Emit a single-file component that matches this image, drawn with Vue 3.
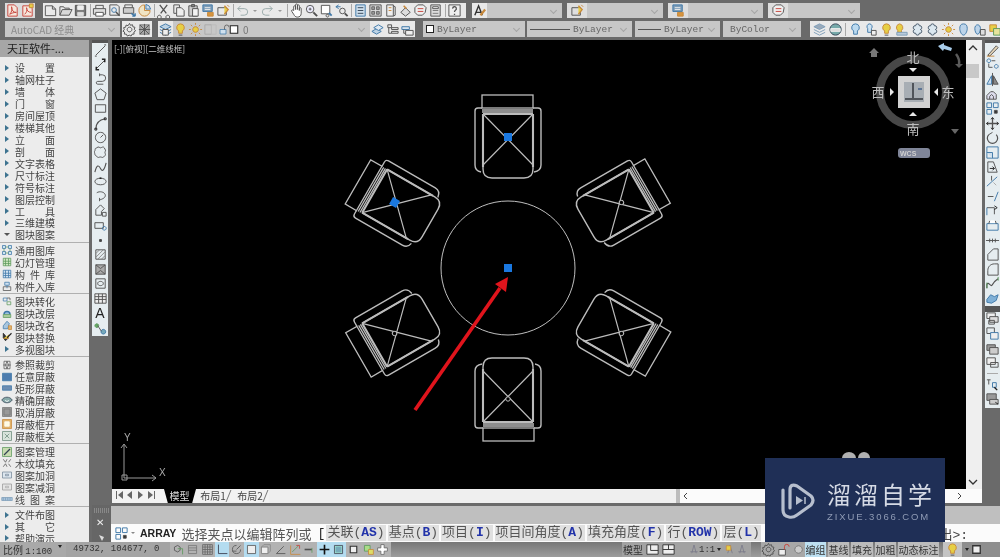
<script setup>
import { h } from 'vue'

const D = '#525252', B = '#3f78a8', O = '#c8893c', Y = '#e6cf45', R = '#c8443c', G = '#5d9a5d', L = '#7d9db8'
const icons = {
  pdfa: [['M3 2h7l3 3v9H3z', R, '#f6e6dc'], ['M5 12c2-2 3-5 2-8 0 4 2 6 5 6-3 0-5 1-7 2z', R]],
  pdfb: [['M3 3h7l3 3v8H3z', R, '#f6e6dc'], ['M10 1h4v4h-4z', O, Y], ['M5 12c2-2 3-4 2-7 0 3 2 5 5 5', R]],
  new: [['M2.5 3h7.5l3.5 3.5V13.5H2.5z'], ['M10 3v3.5h3.5']],
  open: [['M2 13V4h4l1 1.5h5V7'], ['M2 13l2.5-6H15l-3 6z', D, '#d8d8d8']],
  save: [['M2.5 2.5h11v11h-11z', D, '#777'], ['M5 3h6v4H5z', '#eee', '#eee'], ['M5 10h6v3.5H5z', '#ddd', '#ddd']],
  print: [['M4 6V2.5h8V6'], ['M1.5 6h13v6h-13z', D, '#ddd'], ['M4 10h8v4H4z', D, '#fff']],
  preview: [['M3 2h8l2 2v9H3z'], ['M7.5 7.5m-2.5 0a2.5 2.5 0 1 0 5 0a2.5 2.5 0 1 0-5 0', B], ['M9.5 9.5l4 4', D, 'none', 1.6]],
  publish: [['M3 5V2h8v3'], ['M1.5 5h11v6h-11z', D, '#ccc'], ['M10 11l4 3M14 14v-3M14 14h-3', B, 'none', 1.5]],
  plot3d: [['M8 2a6 6 0 1 0 6 6h-6z', O, '#f0e4c4'], ['M9.5 1.5a6 6 0 0 1 5 5h-5z', B, '#cfe0ee']],
  cut: [['M4 2l7 9M12 2l-7 9', D, 'none', 1.4], ['M3.5 13a2 2 0 1 0 .1 0zM12.5 13a2 2 0 1 0 .1 0z']],
  copy: [['M3 2h6v3'], ['M3 2v9h3'], ['M6 5h5l3 3v6H6z', D, '#eee']],
  paste: [['M3 3h9v11H3z', D, '#ccc'], ['M6 1.5h3V4H6z', D, '#888'], ['M7 6h6v8H7z', D, '#f2f2f2']],
  match: [['M2 2h10v7H2z', B, '#7d9db8'], ['M4 5h6M4 7h6', '#eee'], ['M7 10h6v4H7z', O, '#d7953e']],
  matchp: [['M2 5h9v8H2z', D], ['M9 3l4 4-4 5', O, Y, 1.4], ['M12 2l2 2', O]],
  undo: [['M3 6h7a3.5 3.5 0 0 1 0 7H6', '#9aa'], ['M6 3L3 6l3 3', '#9aa']],
  redo: [['M13 6H6a3.5 3.5 0 0 0 0 7h4', '#9aa'], ['M10 3l3 3-3 3', '#9aa']],
  pan: [['M5 8V4a1 1 0 0 1 2 0v3-5a1 1 0 0 1 2 0v5-4a1 1 0 0 1 2 0v5-2a1 1 0 0 1 2 0v5c0 3-2 4-4 4s-3-1-4-3L3 9c-1-2 1-2 2-1z', D, '#fff']],
  zoomr: [['M6.5 6.5m-4 0a4 4 0 1 0 8 0a4 4 0 1 0-8 0', D, '#eef'], ['M10 10l4 4', D, 'none', 2], ['M5 6.5h3M6.5 5v3', D]],
  zoomw: [['M2.5 2.5h9v9h-9z', D, '#fff'], ['M10.5 10.5l3 3', B, 'none', 2], ['M9 12a1.5 1.5 0 1 0 .1 0', D]],
  zoomp: [['M2 4l3-2M2 4l3 2M2 4h5', B], ['M9 8.5m-3 0a3 3 0 1 0 6 0a3 3 0 1 0-6 0'], ['M11.5 11l3 3', D, 'none', 2]],
  props: [['M3 2h10v12H3z', B, '#cfdfec'], ['M5 5h6M5 8h6M5 11h6', '#345']],
  dc: [['M2 2h12v12H2z', D, '#ddd'], ['M4 4h3v3H4zM9 4h3v3H9zM4 9h3v3H4zM9 9h3v3H9z', '#666', '#999']],
  tools: [['M4 2h7v12H4z', D, '#eee'], ['M11 3l2 1v9l-2 1', D], ['M6 5h3M6 8h3', O]],
  sheet: [['M3 10l5-5 5 5-5 4z', D, '#ddd'], ['M6 3l3 3', O, 'none', 1.6]],
  markup: [['M5 2h6l3 3-1 5-3 3H5l-3-3V5z', D, '#eee'], ['M5 6h6M5 9h6', R]],
  calc: [['M3 2h10v12H3z', D, '#ddd'], ['M5 4h6v2H5z', D, '#fff'], ['M5 8h6M5 11h6', '#777']],
  help: [['M2 2h12v12H2z', D, '#eee'], ['M6 6a2 2 0 1 1 3 1.7c-1 .6-1 1-1 2M8 11.5v1.2', D, 'none', 1.4]],
  atext: [['M3 13L7 3l4 10M4.5 10h5', '#333', 'none', 1.5], ['M9 13l5-6', O, 'none', 2.4]],
  gear: [['M8 5.5a2.5 2.5 0 1 0 .1 0z'], ['M8 1.5l1 2 2.2-.6.4 2.2 2.2.5-.7 2.2 1.4 1.6-1.8 1.3.2 2.2-2.2.1-1 2-2-1-2 1-1-2-2.2-.1.2-2.2L1 9.8l1.4-1.6-.7-2.2 2.2-.5.4-2.2 2.2.6z']],
  wsp: [['M3 3h10v10H3z', '#777', '#aaa'], ['M3 3l10 10M13 3L3 13M8 2v12M2 8h12', '#555']],
  layer: [['M2 5l6-3 6 3-6 3z', B, '#bcd2e4'], ['M2 8l6 3 6-3M2 11l6 3 6-3', B], ['M5 8h6v6H5z', D, '#eee']],
  bulb: [['M8 2a4 4 0 0 0-2 7.5V12h4V9.5A4 4 0 0 0 8 2z', O, Y], ['M6 14h4', D]],
  sun: [['M8 5a3 3 0 1 0 .1 0z', O, Y], ['M8 1v2M8 13v2M1 8h2M13 8h2M3 3l1.5 1.5M11.5 11.5L13 13M3 13l1.5-1.5M11.5 4.5L13 3', O]],
  fade: [['M2 3h7v10H2z', '#aaa'], ['M9 3h5v10H9z', '#bbb']],
  lock: [['M4 8h8v6H4z', B, '#cfe0ee'], ['M10 8V5a3 3 0 0 1 6 0', D]],
  sq: [['M3 3h10v10H3z', '#222', '#fff', 1.4]],
  lay2: [['M2 10l5-3 5 3-5 3z', B, '#bcd2e4'], ['M4 6l5-3 5 3-5 3z', B, '#dfe9f2']],
  lay3: [['M3 3h4v3H3zM7 6h7v2H7zM7 10h7v2H7z', D], ['M4 6v6h3', D]],
  lay4: [['M2 5h8v3H2z', B, '#d8e4ee'], ['M6 9h8v5H6z', D, '#eee'], ['M4 8v4h2', D]],
  ball: [['M8 2l6 3-6 3-6-3z', L, '#9ab'], ['M2 8l6 3 6-3M2 11l6 3 6-3', L]],
  globe: [['M8 2a6 6 0 1 0 .1 0z', '#345', '#7aa'], ['M3 7h10v3H3z', '#eee', '#ddd']],
  iso: [['M8 2a4 4 0 0 0-2 7.5V13h4V9.5A4 4 0 0 0 8 2z', B, '#bcdaf0']],
  iso2: [['M7 2a3 3 0 0 0-2 5v4h4V7a3 3 0 0 0-2-5z', B, '#cfe3f2'], ['M9 9h5v5H9z', D, '#f0f0f0']],
  snow: [['M8 2a2 2 0 0 1 2 2 2 2 0 1 1 1 4 2 2 0 1 1-1 4 2 2 0 1 1-4 0 2 2 0 1 1-1-4 2 2 0 1 1 1-4 2 2 0 0 1 2-2z', '#456', '#dce8f0']],
  bulbg: [['M6 2a4 4 0 0 0-2 7v2h4V9a4 4 0 0 0-2-7z', O, Y], ['M3 11h11v3H3z', L, '#b8cadb']],
  blob: [['M8 2c3 0 4 2 4 5s-2 7-4 7-4-4-4-7 1-5 4-5z', B, '#bcd4ea']],
  blob2: [['M6 3c2 0 3 2 3 4s-1 6-3 6-3-4-3-6 1-4 3-4z', B, '#bcd4ea'], ['M9 8h5v6H9z', D, '#ddd']],
  yell: [['M3 3h7v7H3z', O, Y], ['M7 7h7v7H7z', G, '#e8e49c']],
  line: [['M3 13L13 3', D], ['M2 14h2M12 2h2', D]],
  xline: [['M3 13L13 3', D], ['M3.5 10.5v3h3M12.5 5.5v-3h-3', '#222', 'none', 1.6]],
  pline: [['M7 3h3a3.5 3.5 0 0 1 0 7H5c-2 0-2 3 0 3h6', D], ['M7 1.5v3', D]],
  polygon: [['M8 2l6 4.5-2.3 7H4.3L2 6.5z', D]],
  rect: [['M2.5 4h11v8h-11z', D]],
  arc: [['M3 14C3 8 7 4 13 3', D, 'none', 1.2], ['M2 13h2v2H2zM12 2h2v2h-2z', '#222']],
  circle: [['M8 2.5a5.5 5.5 0 1 0 .1 0z', D], ['M8 8l3-3', D]],
  cloud: [['M4 3c2-2 3 0 4 0s3-2 4 0 2 3 1 4 1 3 0 4-2 3-4 2-3 1-4 0-3-2-3-3-1-3 0-4-1-2 2-3z', D]],
  spline: [['M2 13c2-8 4-8 6-4s4 2 6-6', D, 'none', 1.2]],
  ellipse: [['M8 4.5c3.5 0 6 1.6 6 3.5s-2.5 3.5-6 3.5S2 9.9 2 8s2.500-3.500 6-3.500z', D], ['M7 4.500h2', '#222', 'none', 1.600]],
  earc: [['M4 4c3-2 8-1 9 2s-3 5-6 5.500', D], ['M7 9.500v3.500', D]],
  insert: [['M3 7l5-5 4 4-3 3v4H3z', D], ['M10 10h4v4h-4z', D]],
  block: [['M2 5h9v6H2z', D], ['M12 9a2 2 0 1 0 .1 0z', B]],
  point: [['M7 7h2v2H7z', '#444', '#444']],
  hatch: [['M3 3h10v10H3z', D], ['M3 7l4-4M3 11l8-8M5 13l8-8M9 13l4-4', '#888']],
  grad: [['M3 3h10v10H3z', D, '#aaa'], ['M3 3l5 4 5-4M3 13l5-4 5 4', '#555']],
  region: [['M3 3h10v10H3z', D], ['M5 8c0-3 6-3 6 0s-6 3-6 0z', D]],
  table: [['M2 3h12v10H2z', D, '#eee'], ['M2 6h12M2 9h12M6 3v10M10 3v10', D]],
  add: [['M4 4a2 2 0 1 0 .1 0z', G, '#6a6'], ['M11 10a2.500 2.500 0 1 0 .1 0z', B, '#7ab'], ['M5 6l4 6', D]],
  erase: [['M3 13L12 3l2 2-9 9z', D, '#e6d6b8'], ['M2 14h8', O]],
  cpy: [['M4 2a2 2 0 1 0 .1 0zM12 8a2 2 0 1 0 .1 0z', B], ['M7 4h4M4 7v4h4', D]],
  mirror: [['M8 1v14', D], ['M7 4L2 13h5z', B, '#cde'], ['M9 4l5 9H9z', D, '#888']],
  offset: [['M2 13V9l4-4h3l3 3v5z', D, '#dde'], ['M5 13v-3l2-2 2 2v3', D]],
  array: [['M2 2h5v5H2zM9 2h5v5H9zM2 9h5v5H2z', B], ['M10 10h3v3h-3z', D, '#333']],
  move: [['M8 2v12M2 8h12', D, 'none', 1.4], ['M6.500 3.500L8 1.500l1.500 2M6.500 12.500L8 14.500l1.500-2M3.500 6.500L1.500 8l2 1.500M12.500 6.500l2 1.500-2 1.500', '#222']],
  rotate: [['M12 5a5.500 5.500 0 1 1-8 0', D, 'none', 1.300], ['M4 5l4-2.500', D]],
  scale: [['M2 2h12v12H2z', B], ['M2 8h6v6', B, '#cfe0ee']],
  stretch: [['M3 2h6l4 11H3z', D], ['M5 9h5M8 7l2 2-2 2', '#222']],
  trim: [['M2 13L13 3', B], ['M7 2v5', D], ['M9 9l3 3', '#aaa']],
  extend: [['M3 8h6', D], ['M10 13L14 3', B]],
  brk: [['M2 5h8v7', D], ['M10 3l3 2-3 2', '#222'], ['M2 5v8', B]],
  brk2: [['M2 6h12v7H2z', B], ['M5 4h6', '#fff', 'none', 3], ['M5 3l-1 3M11 3l1 3', D]],
  join: [['M1 8h14', D], ['M5 6v4M8 6v4M11 6v4', D]],
  chamfer: [['M3 14V8l6-6h5v12z', D]],
  fillet: [['M3 14V9c0-4 3-7 7-7h4v12z', D]],
  blend: [['M2 13V9c2-4 4 4 6 0s3-4 6-6', D, 'none', 1.300], ['M2 7v6M14 1v4', G]],
  explode: [['M2 9l4-5 4 2 4-2-2 6-5 3-5-1z', B, '#7fb0d6']],
  ord1: [['M2 2h9v6H2z', D, '#eee'], ['M5 6h9v6H5z', D, '#ddd'], ['M4 10h6v4H4z', D]],
  ord2: [['M2 2h8v6H2z', D], ['M6 7h8v7H6z', B, '#eee']],
  ord3: [['M2 4h9v6H2z', D, '#999'], ['M5 7h9v7H5z', D, '#ccc']],
  ord4: [['M2 3h9v7H2z', D, '#eee'], ['M6 8h8v5H6z', D]],
  txtf: [['M2 3h4M4 3v5', D], ['M8 6h4v5H8z', B], ['M10 11l3 3', '#222', 'none', 1.500]],
  hatchb: [['M2 3h10v7H2z', D, '#999'], ['M5 9h9v5H5z', D, '#ccc'], ['M11 12l3 2', '#222']],
  snap: [['M3 5l4-2 3 2v4l-3 2-4-2z', D], ['M7 7h6v7', G]],
  grid2: [['M3 3h10v10H3z', '#777'], ['M3 6h10M3 9h10', '#777']],
  grid: [['M2 2h12v12H2zM2 5h12M2 8h12M2 11h12M5 2v12M8 2v12M11 2v12', '#666']],
  ortho: [['M3 2v11h11', '#334']],
  polar: [['M8 3a5 5 0 1 0 5 5', D], ['M8 8l5-5', D], ['M3 10h5', D]],
  osnap: [['M3 3h10v10H3z', '#555', '#eee']],
  o3d: [['M3 5h8v8H3z', '#777', '#eee'], ['M3 5l3-3h8v8l-3 3', '#888']],
  ducs: [['M3 13L12 4M3 13h11', D]],
  dyn: [['M2 14V3M2 14h12', O], ['M4 11l8-8', G], ['M9 3h4v4', R]],
  lw: [['M2 8h9', D, 'none', 2], ['M11 6v6', G]],
  plus: [['M8 2v12M2 8h12', '#111', 'none', 2]],
  qp: [['M3 3h10v10H3z', '#445', '#9dc'], ['M5 5h6v6H5z', '#7ab', '#7ab']],
  sq2: [['M4 4h8v8H4z', '#333', '#eee', 1.4]],
  mixed: [['M3 3h7v7H3z', G, '#ad8'], ['M8 8h6v6H8z', O, '#dd6']],
  cross: [['M6 2h4v4h4v4h-4v4H6v-4H2V6h4z', '#666', '#fff']],
  mdl1: [['M2 3h12v10H2z', '#333', '#eee'], ['M6 3v6h8', '#333']],
  mdl2: [['M2 3h12v10H2z', '#333', '#eee'], ['M2 8h12M8 3v5', '#333']],
  anno: [['M8 2L5 13M8 2l3 11M3 11h10', '#778']],
  annoy: [['M8 2L5 13M8 2l3 11', '#778'], ['M3 3h6v6H3z', O, Y]],
  cylock: [['M3 8h7v6H3z', D, '#eee'], ['M9 8V5a2.500 2.500 0 0 1 5 0', R]],
  dot: [['M8 4a4 4 0 1 0 .1 0z', '#777', '#ccc']],
  g1: [['M2 2h4v4H2zM10 2h4v4h-4zM2 10h4v4H2zM10 10h4v4h-4z', B, '#cfe4f3'], ['M6 4h4M6 12h4M4 6v4M12 6v4', G]],
  g2: [['M3 3h10v10H3z', G, '#cfe6c0'], ['M3 7h10M3 10h10M6 3v10M10 3v10', G]],
  g3: [['M3 3h10v10H3z', B, '#cfe0f0'], ['M3 7h10M3 10h10M6 3v10M10 3v10', B]],
  g4: [['M5 3h6v4H5z', B, '#cfe0f0'], ['M3 9h10v5H3z', D], ['M8 7v4', B]],
  c1: [['M3 4h5v4H3z', B], ['M8 9h5v4H8z', G], ['M8 4l4 0v3', D]],
  c2: [['M4 10a4 4 0 1 1 8 0', B, '#9cc0de', 2], ['M3 10h10v4H3z', G, '#aacb9c']],
  c3: [['M3 9l5-6 3 3-2 7H3z', B, '#a8c6de'], ['M10 9h4v5h-4z', O, '#e0b26a']],
  c4: [['M3 3l6 7-3 3-3-4z', '#222', '#333'], ['M3 10h7V5', O, Y], ['M8 9l6-6', '#222', 'none', 1.500]],
  d1: [['M8 3l2 5-2 5-2-5z', '#555'], ['M3 8h10', '#555'], ['M4 3h8v10H4z', '#555']],
  d2: [['M2 3h12v10H2z', B, '#4d7cae']],
  d3: [['M2 5h12v6H2z', B, '#6d8db2']],
  d4: [['M1 8c3-5 11-5 14 0-3 5-11 5-14 0z', '#345', '#8aa'], ['M6 8a2 2 0 1 0 4 0', '#fff']],
  d5: [['M2 2h12v12H2z', '#777', '#999'], ['M4 4h8v8H4z', '#777']],
  d6: [['M2 2h12v12H2z', O, '#e0b26a'], ['M5 5h6v6H5z', '#fff', '#fffbe0']],
  d7: [['M2 2h12v12H2z', '#6a8a7a', '#d8e4dc'], ['M5 5l6 6M11 5l-6 6', '#6a8a7a']],
  e1: [['M2 2h12v12H2z', G, '#c8dcb0'], ['M4 12l8-8', '#345', 'none', 1.600]],
  e2: [['M3 3l3 4M8 3L6 7M13 3l-3 4M3 13l3-4M8 13l-2-4M13 13l-3-4', D]],
  e3: [['M2 4h12v8H2z', '#789', '#dde6ee'], ['M6 7h4v2H6z', '#789']],
  e4: [['M2 4h12v8H2z', '#999', '#e4e4e4'], ['M6 7h4v2H6z', '#aaa']],
  e5: [['M1 6h14v4H1z', L, '#a8c4dc'], ['M3 6v4M6 6v4M9 6v4M12 6v4', L]],
}
const Ic = (p) => h('svg', { width: 15, height: 15, viewBox: '0 0 16 16', fill: 'none', class: 'icon' },
  (icons[p.n] || []).map((s, i) => h('path', { key: i, d: s[0], stroke: s[1] || D, fill: s[2] || 'none', 'stroke-width': s[3] || 1 })))
Ic.props = ['n']

const row1 = ['new','open','save','|','print','preview','publish','plot3d','|','cut','copy','paste','match','matchp','|','undo','v','redo','v','|','pan','zoomr','zoomw','zoomp','|','props','dc','tools','sheet','markup','calc','|','help']
const row2r = ['ball','globe','|','iso','iso2','bulb','bulbg','snow','snow','sun','blob','blob2','yell']
const topCombos = [{ ic: 'matchp', w: 76 }, { ic: 'match', w: 75 }, { ic: 'markup', w: 72 }]
const leftTools = ['line','xline','pline','polygon','rect','arc','circle','cloud','spline','ellipse','earc','insert','block','point','hatch','grad','region','table','T','add']
const rightA = ['erase','cpy','mirror','offset','array','move','rotate','scale','stretch','trim','extend','brk','brk2','join','chamfer','fillet','blend','explode']
const rightB = ['ord1','ord2','ord3','ord4','|','txtf','hatchb']

const menu = [
  ['设置'],['轴网柱子'],['墙体'],['门窗'],['房间屋顶'],['楼梯其他'],['立面'],['剖面'],['文字表格'],['尺寸标注'],['符号标注'],['图层控制'],['工具'],['三维建模'],['图块图案','down'],
  null,['通用图库','g1'],['幻灯管理','g2'],['构件库','g3'],['构件入库','g4'],
  null,['图块转化','c1'],['图块改层','c2'],['图块改名','c3'],['图块替换','c4'],['多视图块'],
  null,['参照裁剪','d1'],['任意屏蔽','d2'],['矩形屏蔽','d3'],['精确屏蔽','d4'],['取消屏蔽','d5'],['屏蔽框开','d6'],['屏蔽框关','d7'],
  null,['图案管理','e1'],['木纹填充','e2'],['图案加洞','e3'],['图案减洞','e4'],['线图案','e5'],
  null,['文件布图'],['其它'],['帮助演示'],
]

const chairs = [{ a: 0, sel: true }, { a: 60 }, { a: 120 }, { a: 180 }, { a: 240 }, { a: 300, sel: true }]
const options = [['关联','AS'],['基点','B'],['项目','I'],['项目间角度','A'],['填充角度','F'],['行','ROW'],['层','L']]
const toggles = [['snap'],['grid2'],['grid'],['ortho',1],['polar'],['osnap',1],['o3d'],['ducs'],['dyn'],['lw'],['plus',1],['qp',1],['sq2'],['mixed'],['cross']]
const flags = [['编组',1,21],['基线',0,21],['填充',0,22],['加粗',0,21],['动态标注',0,41]]
</script>

<template>
  <div class="app">
    <header class="bars">
      <div class="row r1">
        <div class="grp g-pdf"><Ic n="pdfa" /><Ic n="pdfb" /></div>
        <div class="grp g-std">
          <template v-for="(it, i) in row1" :key="i">
            <i v-if="it === '|'" class="sep"></i>
            <i v-else-if="it === 'v'" class="drop"></i>
            <Ic v-else :n="it" />
          </template>
        </div>
        <div class="grp g-a"><Ic n="atext" /></div>
        <div class="combo c-first"></div>
        <template v-for="(c, i) in topCombos" :key="i">
          <div class="lead"><Ic :n="c.ic" /></div>
          <div class="combo" :style="{ width: c.w + 'px' }"></div>
        </template>
      </div>
      <div class="row r2">
        <div class="combo c-ws"><span class="ws">AutoCAD 经典</span></div>
        <div class="grp g-ws"><Ic n="gear" /><Ic n="wsp" /></div>
        <div class="grp g-lay"><Ic n="layer" /></div>
        <div class="combo c-layer">
          <Ic n="bulb" /><Ic n="sun" /><Ic n="fade" /><Ic n="lock" class="tight" /><Ic n="sq" class="tight" /><span class="zero">0</span>
        </div>
        <div class="grp g-lay2"><Ic n="lay2" /><Ic n="lay3" /><Ic n="lay4" /></div>
        <div class="combo c-color"><span class="swatch"></span><span class="mono">ByLayer</span></div>
        <div class="combo c-ltype"><span class="ln l40"></span><span class="mono">ByLayer</span></div>
        <div class="combo c-lw"><span class="ln l24"></span><span class="mono">ByLayer</span></div>
        <div class="combo c-plot"><span class="mono">ByColor</span></div>
        <div class="grp g-right">
          <template v-for="(it, i) in row2r" :key="i">
            <i v-if="it === '|'" class="sep"></i>
            <Ic v-else :n="it" />
          </template>
        </div>
      </div>
    </header>

    <div class="main">
      <aside class="panel">
        <div class="p-title">天正软件-...</div>
        <div class="p-list">
          <template v-for="(m, i) in menu" :key="i">
            <div v-if="!m" class="p-hr"></div>
            <div v-else class="p-row">
              <Ic v-if="m[1] && m[1] !== 'down'" :n="m[1]" class="p-ic" />
              <i v-else-if="m[1] === 'down'" class="p-down"></i>
              <i v-else class="p-tri"></i>
              <span class="p-text">{{ m[0] }}</span>
            </div>
          </template>
        </div>
      </aside>

      <div class="work">
        <div class="upper">
          <div class="vtool">
            <i class="t-grip"></i>
            <div v-for="(n, i) in leftTools" :key="i" class="v-item">
              <span v-if="n === 'T'" class="t-a">A</span>
              <Ic v-else :n="n" />
            </div>
          </div>

          <div class="doc">
            <div class="doc-top">
              <svg class="drawing" viewBox="112 40 854 449" width="854" height="449">
                <text x="114" y="52" class="vp">[-][俯视][二维线框]</text>

                <g fill="none" stroke="#bcbcbc">
                  <circle cx="508" cy="268" r="67" stroke="#d4d4d4" stroke-width="0.9" />
                  <g v-for="c in chairs" :key="c.a" :transform="`translate(508 268) rotate(${c.a}) translate(0 -131)`">
                    <rect x="-26" y="-42" width="51" height="13" stroke-width="1.300" />
                    <path d="M-26 -27H25M-26 -25H25" stroke-width="1.300" />
                    <path d="M-26 -29H-30Q-33 -29 -33 -26V28Q-33 34 -27 35" stroke-width="1.400" />
                    <path d="M25 -29H30Q33 -29 33 -26V28Q33 34 26 35" stroke-width="1.400" />
                    <path d="M-25 -23V32Q-25 41 -16 41H16Q25 41 25 32V-23" stroke-width="1.400" />
                    <path d="M-25 -23H25M-25 -23V30M25 -23V30" stroke-width="2.100" />
                    <path d="M-25 -23L25 28M25 -23L-25 28" stroke-width="1.200" />
                    <rect v-if="c.sel" x="-4" y="-4" width="8" height="8" fill="#1a78e0" stroke="none" />
                    <circle v-else r="2.200" fill="#000" />
                  </g>
                </g>

                <rect x="504" y="264" width="8" height="8" fill="#1a78e0" />
                <path d="M415 410L500 288" stroke="#e0141c" stroke-width="3.600" />
                <path d="M508 277L506 292 495 284z" fill="#e0141c" />

                <ellipse cx="849" cy="458" rx="7" ry="6" fill="#b0b0b0" />
                <ellipse cx="864" cy="458" rx="6" ry="6" fill="#b0b0b0" />

                <g fill="none" stroke="#9a9a9a">
                  <path d="M124 445V478H156" />
                  <path d="M122 475h5v5h-5z" />
                  <path d="M121 448l3-4 3 4M152 475l4 3-4 3" />
                </g>
                <text x="124" y="441" class="ucs">Y</text>
                <text x="159" y="476" class="ucs">X</text>

                <circle cx="913" cy="92" r="33" fill="none" stroke="#484848" stroke-width="8" />
                <rect x="898" y="76" width="32" height="32" fill="#d2d2d2" />
                <rect x="904" y="82" width="20" height="20" fill="#a8aeb4" />
                <path d="M913 83V99M905 99H923" stroke="#50545a" stroke-width="2" fill="none" />
                <path d="M918 89h4" stroke="#44608a" stroke-width="1.500" />
                <text x="913" y="62" class="vc">北</text>
                <text x="913" y="134" class="vc">南</text>
                <text x="878" y="97" class="vc">西</text>
                <text x="948" y="97" class="vc">东</text>
                <g fill="#e8e8e8">
                  <path d="M909 68h8l-4 4z" />
                  <path d="M909 116h8l-4-4z" />
                  <path d="M890 88v8l4-4z" />
                  <path d="M938 88v8l-4-4z" />
                </g>
                <path d="M869 53l5-5 5 5h-2v4h-6v-4z" fill="#777" />
                <path d="M938 46l6-3v2l8 3-1 3-7-2-1 2z" fill="#a9cdeb" />
                <path d="M956 54q4 5 3 11" stroke="#5a5a5a" stroke-width="2.500" fill="none" />
                <path d="M955 64h8l-4 4z" fill="#5a5a5a" />
                <path d="M951 129h8l-4 5z" fill="#666" />
                <rect x="898" y="148" width="32" height="10" rx="3" fill="#7f8598" />
                <text x="900" y="156" class="wcs">WCS</text>
              </svg>

              <div class="vscroll">
                <svg width="15" height="10" viewBox="0 0 15 10"><path d="M3 7l4-4 4 4" fill="none" stroke="#333" stroke-width="1.300" /></svg>
                <i class="thumb"></i>
                <svg class="down" width="15" height="10" viewBox="0 0 15 10"><path d="M3 3l4 4 4-4" fill="none" stroke="#333" stroke-width="1.300" /></svg>
              </div>
            </div>
            <div class="tabs">
              <div class="navs">
                <svg width="46" height="12" viewBox="0 0 46 12" fill="#666"><path d="M5 2v8H4V2zM11 2v8L6 6zM20 2v8l-5-4zM26 2v8l5-4zM36 2v8l5-4zM42 2v8h1V2z" /></svg>
              </div>
              <div class="tab on">模型</div>
              <div class="tab">布局1</div>
              <div class="tab">布局2</div>
              <div class="hs-fill"></div>
              <i class="hs-edge"></i>
              <div class="hs-track">
                <svg width="10" height="12" viewBox="0 0 10 12"><path d="M6 3L3 6l3 3" fill="none" stroke="#444" /></svg>
                <svg width="10" height="12" viewBox="0 0 10 12"><path d="M4 3l3 3-3 3" fill="none" stroke="#444" /></svg>
              </div>
            </div>
          </div>

          <div class="rtools">
            <div class="rtool">
              <i class="t-grip"></i>
              <div v-for="(n, i) in rightA" :key="i" class="v-item"><Ic :n="n" /></div>
            </div>
            <div class="rtool second">
              <i class="t-grip big"></i>
              <template v-for="(n, i) in rightB" :key="i">
                <i v-if="n === '|'" class="r-sep"></i>
                <div v-else class="v-item"><Ic :n="n" /></div>
              </template>
            </div>
          </div>
        </div>

        <div class="cmd">
          <div class="c-grip">
            <i class="dots"></i>
            <span class="close">✕</span>
            <svg width="8" height="7" viewBox="0 0 8 7" class="cg-arrow"><path d="M1 1l5 2-2 4z" fill="#ddd" /></svg>
          </div>
          <div class="c-main">
            <div class="c-hist"></div>
            <div class="c-line">
              <Ic n="array" />
              <i class="c-tri"></i>
              <b class="c-name">ARRAY</b>
              <span class="c-prompt">选择夹点以编辑阵列或</span>
              <span class="c-br">[</span>
              <span v-for="o in options" :key="o[0]" class="opt">{{ o[0] }}(<b>{{ o[1] }}</b>)</span>
              <span class="c-end">出&gt;:</span>
            </div>
          </div>
        </div>
      </div>
    </div>

    <footer class="status">
      <div class="s-scale">比例 <span class="mono">1:100</span><i class="s-up"></i></div>
      <div class="s-coord mono">49732, 104677, 0</div>
      <div class="s-toggles">
        <span v-for="t in toggles" :key="t[0]" class="tg" :class="{ lit: t[1] }"><Ic :n="t[0]" /></span>
      </div>
      <div class="s-grow"></div>
      <div class="s-model"><span>模型</span><Ic n="mdl1" /><Ic n="mdl2" /></div>
      <div class="s-anno"><Ic n="anno" /><span class="mono">1:1</span><i class="s-up"></i><Ic n="annoy" /><Ic n="anno" /></div>
      <div class="s-ws"><Ic n="gear" /><Ic n="cylock" /><Ic n="dot" /></div>
      <div class="s-flags">
        <span v-for="f in flags" :key="f[0]" class="flag" :class="{ lit: f[1] }" :style="{ width: f[2] + 'px' }">{{ f[0] }}</span>
      </div>
      <div class="s-end"><span class="s-bulb"><Ic n="bulb" /></span><i class="s-up"></i><Ic n="sq2" /></div>
    </footer>

    <div class="wm">
      <svg class="wm-logo" width="40" height="42" viewBox="778 481 40 42" fill="none">
        <path d="M783 490V510Q783 516 789 517Q793 518 797 515L811 505Q815 500 811 496L797 486Q790 483 790 490V508" stroke="#b7bfce" stroke-width="3.200" stroke-linejoin="round" stroke-linecap="round" />
        <path d="M796 496l7 4.500-7 4.500z" fill="#b7bfce" />
        <path d="M805 497v7" stroke="#b7bfce" stroke-width="1.500" />
      </svg>
      <div class="wm-text">
        <div class="wm-cn">溜溜自学</div>
        <div class="wm-en">ZIXUE.3066.COM</div>
      </div>
    </div>
  </div>
</template>

<style>
html, body { margin: 0; background: #6a6a6a; }
</style>

<style scoped>
.app {
  position: relative;
  width: 1000px;
  height: 557px;
  overflow: hidden;
  display: flex;
  flex-direction: column;
  background: #6a6a6a;
  font-family: "Noto Sans CJK SC", "Liberation Sans", sans-serif;
  font-size: 10px;
  color: #333;
  filter: blur(0.35px);
}
i { display: block; font-style: normal; }
.icon { display: block; flex: none; }
.mono { font-family: "Liberation Mono", "Noto Sans CJK SC", monospace; font-size: 9px; }

/* toolbars */
.bars { height: 40px; flex: none; display: flex; flex-direction: column; padding-top: 3px; box-sizing: border-box; }
.row { display: flex; height: 15px; align-items: stretch; }
.r2 { margin-top: 3px; height: 16px; }
.grp { display: flex; align-items: center; background: #e9e9e9; }
.sep { width: 1px; height: 13px; margin: 0 1.5px; background: #a8a8a8; flex: none; }
.drop { width: 0; height: 0; margin: 0 3px; flex: none; border: 2px solid transparent; border-top: 2.500px solid #999; border-bottom: 0; }
.g-pdf { margin-left: 5px; width: 30px; background: #dcdcdc; }
.g-std { margin-left: 8px; width: 423px; }
.g-a { margin-left: 6px; width: 15px; }
.combo { position: relative; display: flex; align-items: center; background: #c7c7c7; flex: none; box-sizing: border-box; padding-left: 3px; }
.combo::after { content: ""; position: absolute; right: 6px; top: 5px; width: 4px; height: 4px; border-right: 1px solid #a5a5a5; border-bottom: 1px solid #a5a5a5; transform: rotate(45deg); }
.c-first { width: 75px; }
.lead { width: 20px; flex: none; margin-left: 5px; display: flex; align-items: center; justify-content: center; background: #dedede; }
.c-ws { margin-left: 5px; width: 115px; padding-left: 6px; }
.ws { color: #8d8d8d; font-size: 10px; }
.g-ws { margin-left: 2px; width: 30px; }
.g-lay { margin-left: 6px; width: 17px; justify-content: center; }
.c-layer { width: 197px; padding-left: 0; }
.tight { margin-left: -1px; width: 12px; }
.zero { color: #777; margin-left: 3px; font-size: 10px; }
.g-lay2 { width: 45px; }
.c-color { margin-left: 8px; width: 102px; }
.swatch { width: 6px; height: 6px; border: 1px solid #222; background: #fff; margin-right: 3px; }
.c-color .mono, .c-ltype .mono, .c-lw .mono, .c-plot .mono { color: #666; font-size: 9.500px; }
.c-ltype { margin-left: 2px; width: 105px; }
.c-lw { margin-left: 3px; width: 85px; }
.c-plot { margin-left: 3px; width: 78px; padding-left: 7px; }
.ln { height: 1px; background: #555; margin-right: 3px; }
.l40 { width: 40px; }
.l24 { width: 23px; }
.g-right { margin-left: 9px; flex: 1; gap: 0.500px; padding-left: 2px; }

/* main */
.main { flex: 1; display: flex; min-height: 0; }
.panel { width: 89px; flex: none; display: flex; flex-direction: column; background: #ececec; overflow: hidden; }
.p-title { height: 17px; flex: none; background: #a6a6a6; line-height: 17px; padding-left: 7px; font-size: 11px; color: #222; }
.p-list { padding-top: 5px; }
.p-row { height: 11.930px; display: flex; align-items: center; position: relative; }
.p-text { position: absolute; left: 15px; width: 40px; text-align: justify; text-align-last: justify; line-height: 11px; color: #444; }
.p-ic { width: 12px; height: 12px; margin-left: 1px; }
.p-tri { margin-left: 5px; border: 3px solid transparent; border-left: 4px solid #3d7390; border-right: 0; }
.p-down { margin-left: 4px; border: 3px solid transparent; border-top: 3px solid #555; border-bottom: 0; }
.p-hr { height: 3.500px; display: flex; flex-direction: column; justify-content: center; position: relative; }
.p-hr::after { content: ""; display: block; height: 1px; background: #b0b0b0; }

.work { flex: 1; display: flex; flex-direction: column; min-width: 0; }
.upper { height: 465px; flex: none; display: flex; }
.vtool { margin-left: 3px; width: 16px; height: 296px; flex: none; background: #e6edf0; }
.t-grip { height: 3px; background: #555; }
.t-grip.big { height: 6px; }
.v-item { height: 14.600px; display: flex; align-items: center; justify-content: center; }
.t-a { font: 14px "Liberation Sans", sans-serif; color: #222; }

.doc { margin-left: 4px; width: 870px; flex: none; display: flex; flex-direction: column; }
.doc-top { display: flex; height: 449px; }
.drawing { display: block; background: #000; flex: none; }
.vp { font-size: 8.500px; fill: #c4c4c4; }
.ucs { font: 10px "Liberation Sans", sans-serif; fill: #aaa; }
.vc { font-size: 13px; fill: #bdbdbd; text-anchor: middle; }
.wcs { font: bold 7px "Liberation Sans", sans-serif; fill: #cfcfcf; }
.vscroll { width: 16px; background: #efefef; display: flex; flex-direction: column; padding-top: 3px; box-sizing: border-box; }
.thumb { height: 14px; width: 13px; margin-top: 11px; background: #c8c8c8; }
.down { margin-top: auto; margin-bottom: 2px; }
.tabs { height: 14px; display: flex; align-items: center; background: #f2f2f2; }
.navs { width: 50px; flex: none; box-sizing: border-box; }
.tab { position: relative; width: 37px; text-align: center; font-size: 10px; color: #444; line-height: 14px; flex: none; padding-right: 1px; box-sizing: border-box; }
.tab.on { width: 32px; margin-left: 2px; margin-right: -1px; background: #000; color: #ddd; clip-path: polygon(0 0, 100% 0, 88% 100%, 12% 100%); }
.tab:not(.on)::after { content: ""; position: absolute; right: 3px; top: 1px; height: 12px; width: 1px; background: #777; transform: skewX(-22deg); }
.hs-fill { flex: 1; align-self: stretch; background: #efefef; }
.hs-edge { width: 4px; align-self: stretch; background: #bcbcbc; }
.hs-track { width: 302px; padding: 0 18px 0 1px; box-sizing: border-box; display: flex; justify-content: space-between; align-self: stretch; align-items: center; background: #fbfbfb; }

.rtools { margin-left: 3px; width: 15px; flex: none; }
.rtool { background: #e6edf0; }
.second { padding-bottom: 2px; }
.r-sep { height: 1px; margin: 3px 2px; background: #aaa; }

/* command */
.cmd { height: 37px; flex: none; display: flex; }
.c-grip { margin-left: 3px; width: 19px; flex: none; background: #666; position: relative; }
.dots { height: 5px; margin: 3px 2px 0; background: repeating-linear-gradient(90deg, #888 0 1px, #666 1px 2px); }
.close { position: absolute; left: 4px; top: 12px; font: bold 10px "DejaVu Sans", sans-serif; color: #eee; }
.cg-arrow { position: absolute; left: 6px; bottom: 1px; }
.c-main { flex: 1; min-width: 0; display: flex; flex-direction: column; }
.c-hist { height: 18px; flex: none; margin-top: 1px; background: #bfbfbf; }
.c-line { height: 18px; flex: none; display: flex; align-items: center; background: #fbfbfb; padding-left: 3px; font-size: 13px; color: #555; white-space: nowrap; overflow: hidden; }
.c-tri { width: 0; height: 0; margin: 0 5px 0 2px; border: 2px solid transparent; border-top: 2px solid #888; border-bottom: 0; }
.c-name { font: bold 10.500px "Liberation Sans", sans-serif; color: #222; margin-right: 5px; }
.c-br { width: 7px; margin: 0 2px 0 6px; font-family: "Liberation Mono", monospace; color: #222; }
.opt { background: #e0e0e0; margin-right: 2px; padding: 0 1px; line-height: 16px; font-family: "Liberation Mono", "Noto Sans CJK SC", monospace; }
.opt b { font-weight: 700; color: #2233aa; }
.c-end { margin-left: auto; margin-right: 32px; font-family: "Liberation Mono", "Noto Sans CJK SC", monospace; color: #444; }

/* status */
.status { position: relative; z-index: 2; height: 15px; flex: none; display: flex; align-items: stretch; background: linear-gradient(#777, #9c9c9c); font-size: 10px; color: #333; }
.s-scale { position: relative; width: 66px; flex: none; box-sizing: border-box; padding-left: 3px; background: #a9a9a9; line-height: 15px; }
.s-up { width: 0; height: 0; flex: none; border: 2.500px solid transparent; border-top: 3px solid #222; border-bottom: 0; }
.s-scale .s-up { position: absolute; right: 4px; top: 3px; }
.s-coord { width: 104px; flex: none; box-sizing: border-box; padding-left: 7px; background: #a4a4a4; line-height: 15px; color: #333; }
.s-toggles { display: flex; flex: none; padding: 0 1px; background: #b2b2b2; }
.tg { width: 14.600px; display: flex; align-items: center; justify-content: center; }
.tg .icon { width: 13px; height: 13px; }
.tg.lit { background: #b4dcf0; }
.s-grow { flex: 1; }
.s-model { width: 66px; flex: none; display: flex; align-items: center; gap: 1px; box-sizing: border-box; background: #a2a2a2; }
.s-model span { width: 22px; text-align: center; }
.s-anno { width: 63px; flex: none; display: flex; align-items: center; background: #a2a2a2; padding-left: 0; box-sizing: border-box; }
.s-anno .mono { margin: 0 2px 0 -1px; }
.s-anno .s-up { margin-right: 3px; }
.s-anno .icon { width: 12px; }
.s-ws { margin-left: 10px; width: 44px; flex: none; display: flex; align-items: center; background: #a8a8a8; }
.s-flags { display: flex; flex: none; gap: 2px; }
.flag { text-align: center; line-height: 15px; background: #bcbcbc; flex: none; color: #333; }
.flag.lit { background: #bde0f2; }
.s-end { margin-left: 4px; flex: none; width: 57px; display: flex; align-items: center; background: #8e8e8e; }
.s-bulb { width: 19px; display: flex; justify-content: center; background: #c4c4c4; margin-right: 3px; }

/* watermark */
.wm { position: absolute; left: 765px; top: 458px; width: 180px; height: 84px; background: #1f2f56; display: flex; padding: 23px 0 0 13px; box-sizing: border-box; }
.wm-logo { flex: none; }
.wm-text { margin-left: 9px; }
.wm-cn { font-size: 24px; line-height: 28px; letter-spacing: 3px; color: #d5dae5; margin-top: -1px; white-space: nowrap; }
.wm-en { font: 9.500px "Liberation Sans", sans-serif; letter-spacing: 1.900px; color: #8f9bb5; margin-top: 3px; white-space: nowrap; }
</style>
